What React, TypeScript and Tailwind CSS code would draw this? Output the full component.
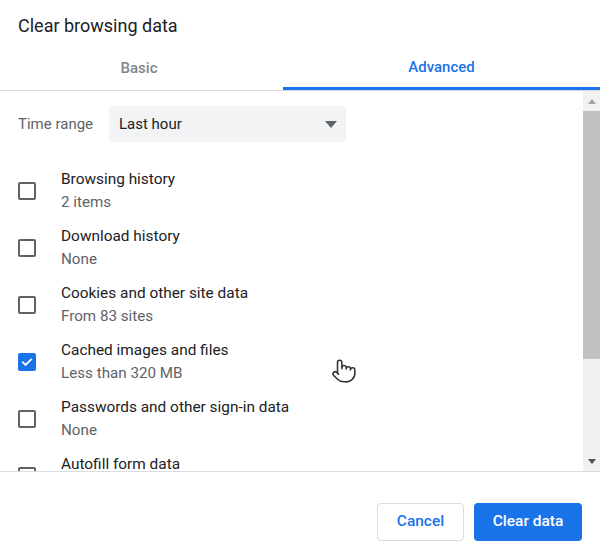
import { Pointer } from "lucide-react"

type Item = {
  title: string
  sub: string
  checked?: boolean
}

const items: Item[] = [
  { title: "Browsing history", sub: "2 items" },
  { title: "Download history", sub: "None" },
  { title: "Cookies and other site data", sub: "From 83 sites" },
  { title: "Cached images and files", sub: "Less than 320 MB", checked: true },
  { title: "Passwords and other sign-in data", sub: "None" },
  { title: "Autofill form data", sub: "" },
]

function Checkbox({ checked }: { checked?: boolean }) {
  if (checked) {
    return (
      <div className="w-[18px] h-[18px] rounded-[2px] bg-[#1a73e8] flex items-center justify-center shrink-0">
        <svg width="14" height="14" viewBox="0 0 24 24" fill="none">
          <path d="M5 12.5l4.5 4.5L19 7.5" stroke="white" strokeWidth="3" strokeLinecap="square" />
        </svg>
      </div>
    )
  }
  return <div className="w-[18px] h-[18px] rounded-[2px] border-2 border-[#5f6368] shrink-0" />
}

export default function App() {
  return (
    <div className="relative w-[600px] h-[556px] bg-white flex flex-col overflow-hidden font-['Roboto',sans-serif] text-[#202124]">
      {/* Header */}
      <div className="h-[46px] flex items-center px-[18px] pt-[4px] text-[18px]">Clear browsing data</div>

      {/* Tabs */}
      <div className="flex h-[45px] border-b border-[#dadce0]">
        <div className="w-[283px] flex items-center justify-center pr-[5px] text-[15px] font-medium text-[#80868b]">Basic</div>
        <div className="flex-1 flex items-center justify-center text-[15px] font-medium text-[#1a73e8] border-b-[3px] border-[#1a73e8] pt-[2px]">
          Advanced
        </div>
      </div>

      {/* Scroll area */}
      <div className="flex h-[381px] border-b border-[#dadce0]">
        <div className="flex-1 overflow-hidden">
          <div className="flex items-center pl-[18px] pt-[15px] h-[51px]">
            <span className="text-[15px] text-[#5f6368] w-[91px]">Time range</span>
            <div className="w-[237px] h-[36px] rounded-[4px] bg-[#f1f3f4] flex items-center justify-between pl-[10px] pr-[9px]">
              <span className="text-[15px]">Last hour</span>
              <svg width="12" height="7" viewBox="0 0 12 7">
                <path d="M0 0h12L6 7z" fill="#5f6368" />
              </svg>
            </div>
          </div>

          <div className="flex flex-col pt-[20px]">
            {items.map((it) => (
              <div key={it.title} className="flex items-center h-[57px] pl-[18px]">
                <Checkbox checked={it.checked} />
                <div className="ml-[25px] flex flex-col">
                  <span className="text-[15.4px] leading-[23px] h-[23px]">{it.title}</span>
                  <span className="text-[15.2px] leading-[23px] h-[23px] text-[#5f6368]">{it.sub}</span>
                </div>
              </div>
            ))}
          </div>
        </div>

        {/* Scrollbar */}
        <div className="w-[17px] bg-[#f1f1f1] flex flex-col items-center">
          <div className="h-[20px] flex items-center justify-center">
            <svg width="8" height="5" viewBox="0 0 8 5">
              <path d="M0 5h8L4 0z" fill="#a3a3a3" />
            </svg>
          </div>
          <div className="w-full h-[248px] bg-[#c1c1c1]" />
          <div className="flex-1" />
          <div className="h-[20px] flex items-center justify-center">
            <svg width="8" height="5" viewBox="0 0 8 5">
              <path d="M0 0h8L4 5z" fill="#505050" />
            </svg>
          </div>
        </div>
      </div>

      {/* Footer */}
      <div className="flex-1 flex items-start justify-end gap-[10px] pt-[31px] pr-[18px]">
        <button className="w-[87px] h-[38px] rounded-[4px] border border-[#dadce0] bg-white text-[15.5px] font-medium text-[#1a73e8]">
          Cancel
        </button>
        <button className="w-[108px] h-[38px] rounded-[4px] bg-[#1a73e8] text-[15.5px] font-medium text-white">
          Clear data
        </button>
      </div>

      {/* Mouse cursor */}
      <div className="absolute left-[331px] top-[358px]">
        <Pointer size={26} strokeWidth={1.4} color="#333" fill="white" />
      </div>
    </div>
  )
}
